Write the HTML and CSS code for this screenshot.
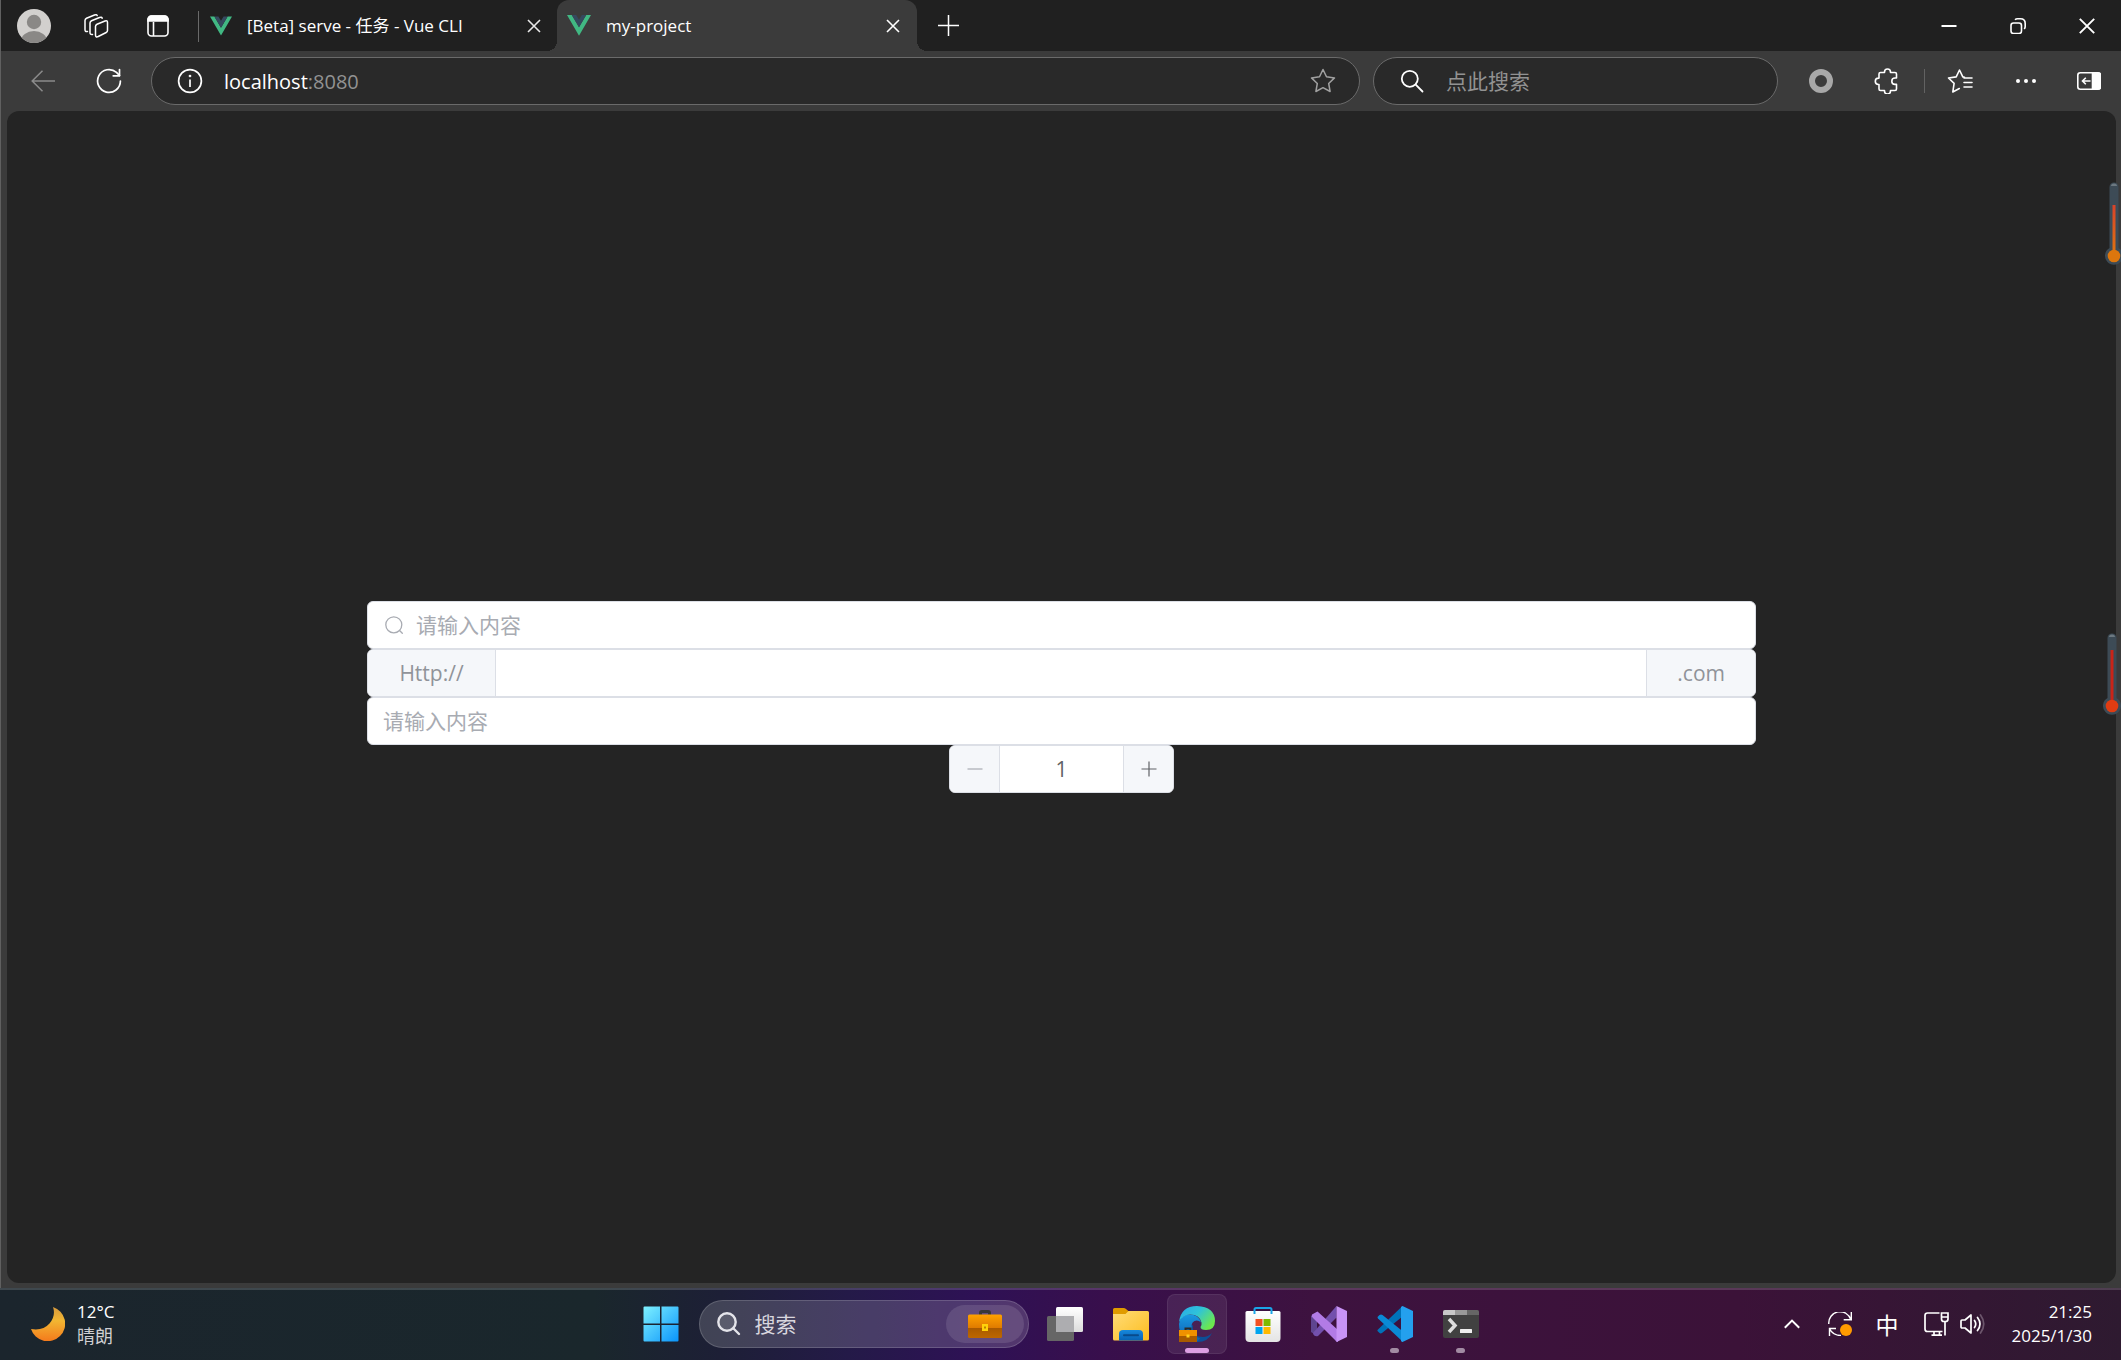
FILE: index.html
```html
<!DOCTYPE html>
<html lang="zh-CN">
<head>
    <meta charset="utf-8">
    <meta name="viewport" content="width=device-width, initial-scale=1.0">
    <title>my-project</title>
    <link rel="stylesheet" href="styles.css">
</head>
<body>
    <div class="browser">
        <header class="tab-strip">
            <div class="strip-tools">
                <button class="strip-btn" aria-label="个人资料">
                    <svg width="34" height="34" viewBox="0 0 34 34">
                        <clipPath id="avatarClip"><circle cx="17" cy="17" r="17"/></clipPath>
                        <g clip-path="url(#avatarClip)">
                            <rect width="34" height="34" fill="#d2d0ce"/>
                            <circle cx="17" cy="13" r="7.2" fill="#8a8886"/>
                            <ellipse cx="17" cy="32" rx="13" ry="10" fill="#8a8886"/>
                        </g>
                    </svg>
                </button>
                <button class="strip-btn" aria-label="工作区">
                    <svg width="26" height="26" viewBox="0 0 26 26" fill="none" stroke="#fff" stroke-width="1.5" stroke-linejoin="round" stroke-linecap="round">
                        <path d="M12.500 13.500q0-1.500 1.500-2.200l8-3.300q2.500-.8 2.500 1.500v8q0 1.400-1.300 2l-8 4q-2.700 1.200-2.700-1.400z"/>
                        <path d="M9.500 21.500q-2.500.3-2.500-1.700V10q0-1.500 1.500-2.200l8-3.300q2.300-.8 2.700.8"/>
                        <path d="M4.500 18.500q-2.500.5-2.500-1.800V7.500q0-1.500 1.500-2.200l8-3.300q2.300-.8 2.700.6"/>
                    </svg>
                </button>
                <button class="strip-btn" aria-label="标签操作">
                    <svg width="24" height="24" viewBox="0 0 24 24" fill="none" stroke="#fff" stroke-width="1.6">
                        <rect x="2" y="2" width="20" height="20" rx="3.500"/>
                        <path d="M2 7V5.500A3.500 3.500 0 0 1 5.500 2h13A3.500 3.500 0 0 1 22 5.500V7z" fill="#fff"/>
                        <path d="M7.500 8v14"/>
                    </svg>
                </button>
            </div>
            <div class="tab">
                <svg class="favicon" width="22" height="20" viewBox="0 0 24 21">
                    <path d="M0 0h4.800L12 12.300 19.200 0H24L12 20.800z" fill="#41b883"/>
                    <path d="M4.800 0h4.400L12 4.800 14.800 0h4.400L12 12.300z" fill="#35495e"/>
                </svg>
                <span class="tab-title">[Beta] serve - 任务 - Vue CLI</span>
                <button class="tab-close" aria-label="关闭标签页">
                    <svg width="14" height="14" viewBox="0 0 14 14" stroke="#e8e8e8" stroke-width="1.6"><path d="M1 1l12 12M13 1L1 13"/></svg>
                </button>
            </div>
            <div class="tab active">
                <svg class="favicon" width="24" height="21" viewBox="0 0 24 21">
                    <path d="M0 0h4.800L12 12.300 19.200 0H24L12 20.800z" fill="#41b883"/>
                    <path d="M4.800 0h4.400L12 4.800 14.800 0h4.400L12 12.300z" fill="#35495e"/>
                </svg>
                <span class="tab-title">my-project</span>
                <button class="tab-close" aria-label="关闭标签页">
                    <svg width="14" height="14" viewBox="0 0 14 14" stroke="#fff" stroke-width="1.6"><path d="M1 1l12 12M13 1L1 13"/></svg>
                </button>
            </div>
            <button class="new-tab" aria-label="新建标签页">
                <svg width="21" height="21" viewBox="0 0 21 21" stroke="#fff" stroke-width="1.500"><path d="M10.500 0v21M0 10.500h21"/></svg>
            </button>
            <div class="window-controls">
                <button aria-label="最小化">
                    <svg width="16" height="16" viewBox="0 0 16 16" stroke="#fff" stroke-width="2"><path d="M.5 8h15"/></svg>
                </button>
                <button aria-label="还原">
                    <svg width="16" height="16" viewBox="0 0 16 16" fill="none" stroke="#fff" stroke-width="1.600">
                        <rect x="1" y="5" width="10.500" height="10.500" rx="2.500"/>
                        <path d="M5 1.800Q6 .8 7.500.8H10.500q4.700 0 4.700 4.700v3Q15.200 10 14.200 11"/>
                    </svg>
                </button>
                <button aria-label="关闭">
                    <svg width="16" height="16" viewBox="0 0 16 16" stroke="#fff" stroke-width="1.900"><path d="M.8.8l14.400 14.400M15.200.8L.8 15.200"/></svg>
                </button>
            </div>
        </header>

        <div class="toolbar">
            <button class="nav-btn" aria-label="后退">
                <svg width="24" height="22" viewBox="0 0 24 22" fill="none" stroke="#8b8b8b" stroke-width="1.500"><path d="M24 11H1M11.500.8L1.200 11l10.300 10.200"/></svg>
            </button>
            <button class="nav-btn" aria-label="刷新">
                <svg width="26" height="26" viewBox="0 0 26 26" fill="none" stroke="#fff" stroke-width="1.700" stroke-linecap="round" stroke-linejoin="round">
                    <path d="M24.400 13A11.400 11.400 0 1 1 20.500 4.400L23.500 7.500"/><path d="M23.500 1.500v6.300H17.200"/>
                </svg>
            </button>
            <div class="address-bar">
                <svg width="26" height="26" viewBox="0 0 26 26" fill="none" stroke="#fff" stroke-width="1.700">
                    <circle cx="13" cy="13" r="11.400"/><path d="M13 11.500v7.500"/><circle cx="13" cy="8" r=".5"/>
                </svg>
                <a class="url" href="#">localhost<span class="port">:8080</span></a>
                <button class="star-btn" aria-label="收藏">
                    <svg width="26" height="26" viewBox="0 0 26 26" fill="none" stroke="#a0a0a0" stroke-width="1.500" stroke-linejoin="round">
                        <path d="M13 1.500l3.500 7.300 8 1.100-5.800 5.600 1.400 8.000L13 19.700l-7.100 3.800 1.400-8.000L1.500 9.900l8-1.100z"/>
                    </svg>
                </button>
            </div>
            <div class="search-bar">
                <svg width="24" height="24" viewBox="0 0 24 24" fill="none" stroke="#fff" stroke-width="1.800" stroke-linecap="round">
                    <circle cx="9.800" cy="9.800" r="8"/><path d="M15.700 15.700L22.500 22.500"/>
                </svg>
                <input type="text" class="search-input" placeholder="点此搜索" aria-label="点此搜索">
            </div>
            <div class="extensions">
                <button aria-label="扩展程序">
                    <svg width="24" height="24" viewBox="0 0 24 24"><circle cx="12" cy="12" r="9" fill="none" stroke="#a8a8a8" stroke-width="6"/></svg>
                </button>
                <button aria-label="扩展">
                    <svg width="26" height="26" viewBox="0 0 26 26" fill="none" stroke="#fff" stroke-width="1.600" stroke-linejoin="round">
                        <path d="M6.500 4.500h4V4a3 3 0 0 1 6 0v.5H21q1.500 0 1.500 1.500v4h-1.500a3.200 3.200 0 0 0 0 6.400h1.500V21q0 1.500-1.500 1.500h-4.500v.5a3 3 0 0 1-6 0v-.5H6.500Q5 22.500 5 21v-4.500h-.5a3.200 3.200 0 0 1 0-6.400H5V6q0-1.500 1.500-1.500z"/>
                    </svg>
                </button>
            </div>
            <span class="toolbar-divider"></span>
            <div class="browser-menu">
                <button aria-label="收藏夹">
                    <svg width="26" height="26" viewBox="0 0 26 26" fill="none" stroke="#fff" stroke-width="1.600" stroke-linejoin="round" stroke-linecap="round">
                        <path d="M17.500 9.200l-1.700-.3L12.500 2 9.200 8.900l-7.700 1.100 5.600 5.300L5.800 24l6.500-3.500"/>
                        <path d="M17 10h8M17 14.500h8M17 19h8"/>
                    </svg>
                </button>
                <button aria-label="设置及其他">
                    <svg width="22" height="6" viewBox="0 0 22 6" fill="#fff"><circle cx="3" cy="3" r="2"/><circle cx="11" cy="3" r="2"/><circle cx="19" cy="3" r="2"/></svg>
                </button>
                <button class="sidebar-btn" aria-label="侧栏">
                    <svg width="24" height="18" viewBox="0 0 24 18" fill="none" stroke="#fff" stroke-width="1.600">
                        <rect x=".8" y=".8" width="22.400" height="16.400" rx="2.500"/>
                        <path d="M15.500 1h6q2 0 2 2v12q0 2-2 2h-6z" fill="#fff"/>
                        <path d="M13.500 9H5.500M8.800 5.700L5.500 9l3.300 3.300"/>
                    </svg>
                </button>
            </div>
        </div>

        <main class="page">
            <div class="el-input">
                <svg class="prefix-icon" width="18" height="18" viewBox="0 0 18 18" fill="none" stroke="#a8abb2" stroke-width="1.300" stroke-linecap="round">
                    <circle cx="8.800" cy="8.800" r="8"/><path d="M14.800 14.800L17.300 17.300"/>
                </svg>
                <input type="text" placeholder="请输入内容" aria-label="搜索内容">
            </div>
            <div class="el-input el-input-group">
                <label class="prepend" for="site">Http://</label>
                <input type="text" id="site">
                <label class="append" for="site">.com</label>
            </div>
            <div class="el-input">
                <input type="text" placeholder="请输入内容" aria-label="内容">
            </div>
            <div class="el-input-number">
                <button class="decrease" aria-label="减少" disabled>
                    <svg width="16" height="16" viewBox="0 0 16 16" stroke="#a8abb2" stroke-width="1.200"><path d="M.5 8h15"/></svg>
                </button>
                <input type="text" value="1" aria-label="数量">
                <button class="increase" aria-label="增加">
                    <svg width="16" height="16" viewBox="0 0 16 16" stroke="#606266" stroke-width="1.200"><path d="M.5 8h15M8 .5v15"/></svg>
                </button>
            </div>
        </main>
    </div>

    <!-- temperature widgets floating over the right edge -->
    <svg class="thermo thermo-warm" width="20" height="86" viewBox="0 0 20 86">
        <defs>
            <linearGradient id="warm" x1="0" y1="0" x2="0" y2="1"><stop offset="0" stop-color="#d8432a"/><stop offset="1" stop-color="#e0750f"/></linearGradient>
        </defs>
        <path d="M5.500 5a4.500 4.500 0 0 1 9 0v61a9 9 0 1 1-9 0z" fill="#3d4b56"/>
        <path d="M7 4a3 2.500 0 0 1 6 0z" fill="#6c7880"/>
        <rect x="8.500" y="23" width="3" height="50" fill="url(#warm)"/>
        <circle cx="10" cy="74" r="6.300" fill="#dd760d"/>
    </svg>
    <svg class="thermo thermo-hot" width="20" height="86" viewBox="0 0 20 86">
        <path d="M5.500 5a4.500 4.500 0 0 1 9 0v60a9 9 0 1 1-9 0z" fill="#3d4b56"/>
        <path d="M7 4a3 2.500 0 0 1 6 0z" fill="#6c7880"/>
        <path d="M8.500 17h3v56h-3z" fill="#c92418"/>
        <circle cx="10" cy="73" r="6.300" fill="#e03c12"/>
    </svg>

    <footer class="taskbar">
        <div class="weather">
            <svg width="34" height="34" viewBox="0 0 34 34">
                <defs><linearGradient id="moon" x1="0" y1="0" x2="0" y2="1"><stop offset="0" stop-color="#d69a3d"/><stop offset=".4" stop-color="#f2b632"/><stop offset="1" stop-color="#f47a1c"/></linearGradient></defs>
                <path d="M22 0A17.500 17.500 0 1 1 0 22Q12 24 18.500 16.500T22 0z" fill="url(#moon)"/>
            </svg>
            <div class="weather-text">
                <div>12°C</div>
                <div class="weather-desc">晴朗</div>
            </div>
        </div>

        <div class="apps">
            <button class="app" aria-label="开始">
                <svg width="36" height="36" viewBox="0 0 36 36">
                    <defs><linearGradient id="win" x1="0" y1="0" x2="1" y2="1"><stop offset="0" stop-color="#7ef1ff"/><stop offset="1" stop-color="#0a94fb"/></linearGradient></defs>
                    <path d="M1.500 .5H17v17H.500V1.500q0-1 1-1zM18.500.5h16q1 0 1 1v16h-17zM.500 19H17v16.500H1.500q-1 0-1-1zM18.500 19h17v15.500q0 1-1 1h-16z" fill="url(#win)"/>
                </svg>
            </button>
            <div class="taskbar-search">
                <svg width="24" height="24" viewBox="0 0 24 24" fill="none" stroke="#e4e4ea" stroke-width="2.400" stroke-linecap="round">
                    <circle cx="10" cy="10" r="8.700" fill="#ffffff22"/><path d="M16.500 16.500L22 22"/>
                </svg>
                <input type="text" class="taskbar-input" placeholder="搜索" aria-label="搜索">
                <button class="highlight" aria-label="搜索要闻">
                    <svg width="34" height="28" viewBox="0 0 34 28">
                        <defs>
                            <linearGradient id="caseTop" x1="0" y1="0" x2="0" y2="1"><stop offset="0" stop-color="#ffa200"/><stop offset="1" stop-color="#df7b00"/></linearGradient>
                            <linearGradient id="caseBottom" x1="0" y1="0" x2="0" y2="1"><stop offset="0" stop-color="#8d4700"/><stop offset="1" stop-color="#bd6700"/></linearGradient>
                        </defs>
                        <path d="M12.500 5V3q0-1.500 1.500-1.500h6q1.500 0 1.500 1.500v2" fill="none" stroke="#383838" stroke-width="3"/>
                        <rect y="5" width="34" height="23" rx="1.500" fill="url(#caseBottom)"/>
                        <path d="M1.500 4.500h31q1.500 0 1.500 1.500v12H0V6q0-1.500 1.500-1.500z" fill="url(#caseTop)"/>
                        <rect x="14" y="14" width="6" height="7" fill="#ffd20a"/><path d="M16 16.500h2v2h-2z" fill="#b98400"/>
                    </svg>
                </button>
            </div>
            <button class="app" aria-label="任务视图">
                <svg width="36" height="36" viewBox="0 0 36 36">
                    <defs><linearGradient id="tv" x1="0" y1="0" x2="0" y2="1"><stop offset="0" stop-color="#fff"/><stop offset="1" stop-color="#dcdcdc"/></linearGradient></defs>
                    <rect y="10" width="27" height="25" rx="1.500" fill="#666"/>
                    <rect x="9" y="1" width="27" height="25" rx="1.500" fill="url(#tv)"/>
                    <path d="M9 10h18v16H10.500Q9 26 9 24.500z" fill="#adadb0"/>
                </svg>
            </button>
            <button class="app" aria-label="文件资源管理器">
                <svg width="36" height="36" viewBox="0 0 36 36">
                    <defs>
                        <linearGradient id="folder" x1="0" y1="0" x2="1" y2="1"><stop offset="0" stop-color="#ffdc78"/><stop offset="1" stop-color="#fdbd1e"/></linearGradient>
                        <linearGradient id="tray" x1="0" y1="0" x2="0" y2="1"><stop offset="0" stop-color="#1688dc"/><stop offset="1" stop-color="#0862b4"/></linearGradient>
                    </defs>
                    <path d="M0 3.500Q0 2 1.500 2h9q1.500 0 2.500 1l3 2.500V12H0z" fill="#e09b00"/>
                    <path d="M0 8h12.500l3-3H34.500Q36 5 36 6.500V33q0 1.500-1.500 1.500h-33Q0 34.500 0 33z" fill="url(#folder)"/>
                    <path d="M6 34.500V28q0-4 4-4h16q4 0 4 4v6.500z" fill="url(#tray)"/>
                    <path d="M11 29.300h14" stroke="#084b8c" stroke-width="2" stroke-linecap="round"/>
                </svg>
            </button>
            <button class="app current" aria-label="Microsoft Edge">
                <svg width="36" height="36" viewBox="0 0 36 36">
                    <defs>
                        <linearGradient id="edgeTop" x1="0" y1="0" x2="1" y2=".6"><stop offset="0" stop-color="#2aa7e8"/><stop offset=".5" stop-color="#2fc3d9"/><stop offset="1" stop-color="#6ce84e"/></linearGradient>
                        <linearGradient id="edgeLeft" x1="0" y1="0" x2="0" y2="1"><stop offset="0" stop-color="#1a9ae2"/><stop offset="1" stop-color="#0b5bb0"/></linearGradient>
                    </defs>
                    <path d="M14 19q-1 12 10 12 5 0 9-4-4 9-14.500 9Q6 35.500 3 24z" fill="#0d4f97"/>
                    <path d="M0 18Q1 9 10 8.500q10 0 12 8-3-3-6.500-1.500-4 2-2.500 8 1.500 7 8 9.500-2 3.500-5 3.300Q0 34 0 18z" fill="url(#edgeLeft)"/>
                    <path d="M0 16Q2 0 18 0q18 1 18 15 0 9-9 9-5.500 0-5.500-3 1.500-1.500 1-4.500Q20.500 8.500 11 8.500 4 8.500 0 16z" fill="url(#edgeTop)"/>
                    <path d="M6.500 24v-1.500h5V24" fill="none" stroke="#2a2a2a" stroke-width="2"/>
                    <path d="M0 24h18v12H0z" fill="#a85b00"/><path d="M0 24h18v6H0z" fill="#ef9100"/>
                    <path d="M7.500 28.500h3v3h-3z" fill="#ffd21c"/>
                </svg>
            </button>
            <button class="app" aria-label="Microsoft Store">
                <svg width="36" height="36" viewBox="0 0 36 36">
                    <defs><linearGradient id="bag" x1="0" y1="0" x2="0" y2="1"><stop offset="0" stop-color="#fff"/><stop offset="1" stop-color="#e4e4e4"/></linearGradient></defs>
                    <path d="M2 5h32q1.500 0 1.500 1.500V32q0 4-4 4h-27q-4 0-4-4V6.500Q.5 5 2 5z" fill="url(#bag)"/>
                    <path d="M9.500 8V3.500Q9.500 2 11 2h14q1.500 0 1.500 1.500V8" fill="none" stroke="#1aa6e8" stroke-width="2"/>
                    <path d="M10.500 13h7v7h-7z" fill="#f25022"/><path d="M18.500 13h7v7h-7z" fill="#7fba00"/>
                    <path d="M10.500 21h7v7h-7z" fill="#00a4ef"/><path d="M18.500 21h7v7h-7z" fill="#ffb900"/>
                </svg>
            </button>
            <button class="app" aria-label="Visual Studio">
                <svg width="36" height="36" viewBox="0 0 36 36">
                    <path d="M0 10l6-4v24l-6-4z" fill="#5f4590"/>
                    <path d="M2 27L25.500 0v11.500L7 30q-4 1-5-3z" fill="#7350ad"/>
                    <path d="M1 8.500L6.500 5.500 27 24v12Q25 36 24 34L2 12q-2-1.500-1-3.500z" fill="#b27be6"/>
                    <path d="M25.500 0L36 5v26l-10.500 5z" fill="#c893f6"/>
                </svg>
            </button>
            <button class="app running" aria-label="Visual Studio Code">
                <svg width="36" height="36" viewBox="0 0 36 36">
                    <path d="M1 23.500L25.500 0v10.500L5 27q-1.500 1-3-.5l-1.500-1.500q-.5-1 .5-1.500z" fill="#0072b9"/>
                    <path d="M1 12.500q-1-1 0-2L2.500 9Q4 8 5.500 9L26 25.500V36z" fill="#0a8ad6"/>
                    <path d="M25.500 0L36 5v26l-10.500 5q-1 0-1.500-1.500V1z" fill="#24a0ee"/>
                </svg>
            </button>
            <button class="app running" aria-label="终端">
                <svg width="36" height="28" viewBox="0 0 36 28">
                    <rect width="36" height="28" rx="2" fill="#414141"/>
                    <path d="M0 5V2Q0 0 2 0h10v5z" fill="#c8c8c8"/><path d="M12 0h12v5H12z" fill="#999"/><path d="M24 0h10q2 0 2 2v3H24z" fill="#666"/>
                    <path d="M6 9l6 6.500L6 22" fill="none" stroke="#ddd" stroke-width="3.500"/>
                    <rect x="17" y="19" width="12" height="4" rx=".5" fill="#efefef"/>
                </svg>
            </button>
        </div>

        <div class="system-tray">
            <button class="tray-btn" aria-label="显示隐藏的图标">
                <svg width="16" height="10" viewBox="0 0 16 10" fill="none" stroke="#fff" stroke-width="2"><path d="M.8 8.800L8 1.600l7.200 7.200"/></svg>
            </button>
            <button class="tray-btn sync" aria-label="更新">
                <svg width="24" height="24" viewBox="0 0 24 24" fill="none" stroke="#fff" stroke-width="1.400">
                    <path d="M.8 12A11.300 11.300 0 0 1 22.800 7.500M23.300 0v7.800h-7.600M1.500 24v-7.500H8M1.500 16.800Q5 23.500 13 23.500"/>
                    <circle cx="18" cy="18" r="6" fill="#ff9a00" stroke="none"/>
                </svg>
            </button>
            <button class="tray-btn ime" aria-label="输入法">中</button>
            <button class="tray-btn status" aria-label="网络和音量">
                <svg width="25" height="24" viewBox="0 0 25 24" fill="none" stroke="#fff" stroke-width="1.700">
                    <path d="M15.500 1H3.500Q1 1 1 3.500V17q0 2.500 2.500 2.500H18.500M7.500 23.200h10.500M10 19.500v3.500M15.500 19.500v3.500M21 10v13.500"/>
                    <path d="M17.500 1h6.500v6q0 2.500-2.500 2.500H20q-2.500 0-2.500-2.500zM17.500 5H24"/>
                </svg>
                <svg width="25" height="22" viewBox="0 0 25 22" fill="none" stroke="#fff" stroke-width="1.700" stroke-linejoin="round" stroke-linecap="round">
                    <path d="M1 8q0-1 1-1h3l6-5v18l-6-5H2q-1 0-1-1z"/>
                    <path d="M14.500 7.500q2.500 3.500 0 7M17.500 4.500q5 6.500 0 13"/><path d="M20.500 2q6.500 9 0 18" stroke="#6c566c"/>
                </svg>
            </button>
            <div class="clock">
                <div>21:25</div>
                <div>2025/1/30</div>
            </div>
        </div>
    </footer>
</body>
</html>
```
FILE: styles.css
```css
* {
    box-sizing: border-box;
}
body {
    margin: 0;
    height: 100vh;
    display: flex;
    flex-direction: column;
    overflow: hidden;
    position: relative;
    background: #202020;
    color: #fff;
    font-family: "Open Sans", "Noto Sans CJK SC", sans-serif;
    font-size: 17px;
}
button {
    display: flex;
    align-items: center;
    justify-content: center;
    padding: 0;
    border: none;
    background: none;
    color: inherit;
    font: inherit;
    cursor: pointer;
}
input {
    min-width: 0;
    padding: 0;
    border: none;
    outline: none;
    background: none;
    font: inherit;
}
svg {
    display: block;
    flex: none;
}
.browser {
    flex: 1;
    display: flex;
    flex-direction: column;
    border-left: 1px solid #606060;
    background: #3b3b3b;
}

/* tab strip */
.tab-strip {
    display: flex;
    height: 51px;
    background: #202020;
}
.strip-tools {
    display: flex;
    align-items: center;
    width: 198px;
    padding-left: 2px;
    border-right: 1px solid transparent;
    border-image: linear-gradient(transparent 12px, #6a6a6a 12px, #6a6a6a 41px, transparent 41px) 1;
}
.strip-btn {
    width: 62px;
    height: 51px;
}
.tab {
    position: relative;
    display: flex;
    align-items: center;
    width: 358px;
    padding: 0 16px 0 11px;
}
.tab.active {
    width: 360px;
    padding: 0 17px 0 10px;
    background: #3b3b3b;
    border-radius: 12px 12px 0 0;
}
.tab.active::before,
.tab.active::after {
    content: "";
    position: absolute;
    bottom: 0;
    width: 10px;
    height: 10px;
}
.tab.active::before {
    right: 100%;
    background: radial-gradient(circle at 0 0, transparent 10px, #3b3b3b 10px);
}
.tab.active::after {
    left: 100%;
    background: radial-gradient(circle at 100% 0, transparent 10px, #3b3b3b 10px);
}
.tab-title {
    flex: 1;
    margin-left: 15px;
    line-height: 24px;
}
.tab-close {
    width: 14px;
    height: 14px;
}
.new-tab {
    width: 63px;
}
.window-controls {
    display: flex;
    margin-left: auto;
}
.window-controls button {
    width: 69px;
}

/* toolbar */
.toolbar {
    display: flex;
    align-items: center;
    height: 60px;
    padding: 0 2px 0 9px;
}
.nav-btn {
    width: 66px;
    height: 48px;
}
.address-bar,
.search-bar {
    display: flex;
    align-items: center;
    height: 48px;
    border: 1px solid #6a6a6a;
    border-radius: 24px;
    background: #292929;
    font-size: 20px;
}
.address-bar {
    flex: 1;
    margin: 0 13px 0 9px;
    padding: 0 23px 0 25px;
}
.url {
    flex: 1;
    margin-left: 21px;
    color: #fff;
    text-decoration: none;
}
.port {
    color: #929292;
}
.search-bar {
    width: 405px;
    padding: 0 26px;
}
.search-input {
    flex: 1;
    margin-left: 22px;
    color: #fff;
    font-size: 21px;
}
.search-input::placeholder {
    color: #929292;
    opacity: 1;
}
.extensions,
.browser-menu {
    display: flex;
}
.extensions {
    margin-left: 10px;
}
.extensions button,
.browser-menu button {
    width: 66px;
    height: 48px;
}
.browser-menu .sidebar-btn {
    width: 60px;
}
.toolbar-divider {
    width: 1px;
    height: 24px;
    margin: 0 2px 0 4px;
    background: #626262;
}

/* page content */
.page {
    flex: 1;
    display: flex;
    flex-direction: column;
    align-items: center;
    justify-content: center;
    margin: 0 5px 5px 6px;
    padding: 0 360px;
    border-radius: 12px;
    background: #242424;
    font-size: 21px;
}
.el-input,
.el-input-number {
    display: flex;
    align-items: center;
    height: 48px;
    border: 1px solid #dcdfe6;
    border-radius: 6px;
    background: #fff;
    overflow: hidden;
}
.el-input {
    align-self: stretch;
    padding: 0 15px;
}
.el-input input {
    flex: 1;
    height: 46px;
    color: #606266;
}
.el-input input::placeholder {
    color: #a8abb2;
    opacity: 1;
}
.prefix-icon {
    margin: 0 13px 0 2px;
}
.el-input-group {
    padding: 0;
}
.prepend,
.append {
    padding: 0 30px;
    background: #f5f7fa;
    color: #909399;
    line-height: 46px;
    text-align: center;
}
.prepend {
    min-width: 128px;
    border-right: 1px solid #dcdfe6;
}
.append {
    border-left: 1px solid #dcdfe6;
}
.el-input-number {
    width: 225px;
}
.el-input-number button {
    width: 50px;
    height: 46px;
    background: #f5f7fa;
}
.el-input-number .decrease {
    border-right: 1px solid #dcdfe6;
    cursor: not-allowed;
}
.el-input-number .increase {
    border-left: 1px solid #dcdfe6;
}
.el-input-number input {
    flex: 1;
    height: 46px;
    text-align: center;
    color: #606266;
}

/* floating thermometers */
.thermo {
    position: absolute;
    right: -3px;
}
.thermo-warm {
    top: 182px;
}
.thermo-hot {
    top: 633px;
    right: -1px;
}

/* taskbar */
.taskbar {
    display: grid;
    grid-template-columns: 1fr auto 1fr;
    height: 72px;
    padding-bottom: 2px;
    border-top: 2px solid rgba(255, 255, 255, 0.16);
    background: linear-gradient(90deg, #1b252d 0%, #1a272c 28%, #1d1f36 34%, #241a48 40%, #2e1155 46%, #380f4c 52%, #3d123f 62%, #3b1238 82%, #2e1a30 100%) border-box;
}
.weather {
    display: flex;
    align-items: center;
    padding-left: 31px;
    line-height: 24px;
}
.weather-text {
    margin-left: 12px;
}
.weather-desc {
    color: #cfcfd2;
    font-size: 18px;
}
.apps {
    display: flex;
    align-items: center;
    gap: 6px;
}
.app {
    position: relative;
    width: 60px;
    height: 60px;
    border: 1px solid transparent;
    border-radius: 8px;
}
.app.current {
    background: rgba(255, 255, 255, 0.08);
    border-color: rgba(255, 255, 255, 0.07);
}
.app.current::after,
.app.running::after {
    content: "";
    position: absolute;
    bottom: 0;
    width: 9px;
    height: 5px;
    border-radius: 3px;
    background: #a28ba3;
}
.app.current::after {
    width: 24px;
    background: #dd9fe3;
}
.taskbar-search {
    display: flex;
    align-items: center;
    width: 330px;
    height: 48px;
    margin-left: 2px;
    padding: 0 4px 0 17px;
    border: 1px solid rgba(255, 255, 255, 0.16);
    border-radius: 24px;
    background: rgba(255, 255, 255, 0.16);
    font-size: 21px;
}
.taskbar-input {
    flex: 1;
    margin-left: 14px;
    color: #fff;
}
.taskbar-input::placeholder {
    color: #d8d6de;
    opacity: 1;
}
.highlight {
    width: 78px;
    height: 38px;
    border-radius: 19px;
    background: rgba(255, 255, 255, 0.11);
}
.system-tray {
    display: flex;
    align-items: center;
    justify-content: flex-end;
    padding-right: 29px;
}
.tray-btn {
    width: 48px;
    height: 48px;
}
.ime {
    width: 46px;
    font-size: 23px;
}
.status {
    gap: 11px;
    width: 88px;
}
.clock {
    width: 94px;
    text-align: right;
    line-height: 24px;
}
```
